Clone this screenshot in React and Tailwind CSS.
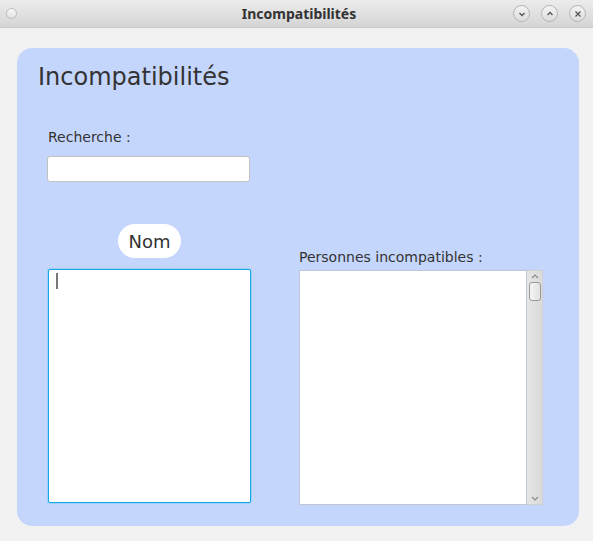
import React from 'react';

const WinButton = ({ children }) => (
  <div className="w-[17px] h-[17px] rounded-full border border-[#b4b4b4] bg-gradient-to-b from-[#f4f4f4] to-[#dcdcdc] flex items-center justify-center text-[#555]">
    {children}
  </div>
);

const App = () => {
  return (
    <div className="w-[593px] h-[541px] bg-[#f2f2f2] flex flex-col" style={{ fontFamily: "'DejaVu Sans', sans-serif" }}>
      {/* Title bar */}
      <div className="h-[28px] bg-gradient-to-b from-[#ececec] to-[#d5d5d5] border-b border-[#c8c8c8] grid grid-cols-[1fr_auto_1fr] items-center px-[6px]">
        <div className="w-[11px] h-[11px] rounded-full border border-[#bdbdbd] bg-gradient-to-b from-[#fafafa] to-[#e2e2e2]" />
        <div className="text-center text-[14px] font-bold text-[#333] pl-[5px]" style={{ fontFamily: "'Noto Sans', sans-serif" }}>
          Incompatibilités
        </div>
        <div className="flex items-center justify-end gap-[11px] pr-[1px]">
          <WinButton>
            <svg width="8" height="8" viewBox="0 0 8 8"><path d="M1.5 3 L4 5.5 L6.5 3" fill="none" stroke="currentColor" strokeWidth="1.3" /></svg>
          </WinButton>
          <WinButton>
            <svg width="8" height="8" viewBox="0 0 8 8"><path d="M1.5 5 L4 2.5 L6.5 5" fill="none" stroke="currentColor" strokeWidth="1.3" /></svg>
          </WinButton>
          <WinButton>
            <svg width="8" height="8" viewBox="0 0 8 8"><path d="M1.5 1.5 L6.5 6.5 M6.5 1.5 L1.5 6.5" fill="none" stroke="currentColor" strokeWidth="1.3" /></svg>
          </WinButton>
        </div>
      </div>

      {/* Body */}
      <div className="flex-1 pt-[20px] pl-[17px] pr-[14px] pb-[15px]">
        <div className="h-full rounded-[15px] bg-[#c5d6fd] pl-[21px] pt-[14px]">
          <h1 className="text-[24px] leading-[30px] text-[#333]">Incompatibilités</h1>

          <div className="pl-[10px] mt-[37px]">
            <div className="text-[14px] leading-[17px] text-[#333]">Recherche :</div>
            <div className="mt-[10px] -ml-[1px] w-[203px] h-[26px] bg-white border border-[#c2c2c2] rounded-[3px]" />
          </div>

          <div className="flex mt-[42px] pl-[10px]">
            {/* Left column */}
            <div className="w-[203px] flex flex-col items-center">
              <div className="h-[34px] px-[10px] rounded-full bg-white flex items-center text-[18px] text-[#333]">Nom</div>
              <div className="mt-[11px] w-[203px] h-[234px] bg-white border border-[#14a8e8] rounded-[2px] shadow-[0_0_0_1px_rgba(120,200,245,0.5)] pl-[7px] pt-[3px]">
                <div className="w-[2px] h-[16px] bg-[#777]" />
              </div>
            </div>

            {/* Right column */}
            <div className="ml-[48px] flex flex-col pt-[25px]">
              <div className="text-[14px] leading-[17px] text-[#333]">Personnes incompatibles :</div>
              <div className="mt-[4px] flex h-[235px]">
                <div className="w-[228px] bg-white border border-[#bfc7d6]" />
                <div className="w-[16px] bg-gradient-to-r from-[#e6e6e6] to-[#dadada] border-y border-r border-[#d0d0d0] flex flex-col items-center justify-between py-[2px]">
                  <div className="flex flex-col items-center">
                    <svg width="10" height="7" viewBox="0 0 10 7"><path d="M2 5 L5 2 L8 5" fill="none" stroke="#888" strokeWidth="1.1" /></svg>
                    <div className="mt-[2px] w-[12px] h-[19px] rounded-[3px] border border-[#9a9a9a] bg-gradient-to-r from-[#f4f4f4] to-[#e2e2e2]" />
                  </div>
                  <svg width="10" height="7" viewBox="0 0 10 7"><path d="M2 2 L5 5 L8 2" fill="none" stroke="#888" strokeWidth="1.1" /></svg>
                </div>
              </div>
            </div>
          </div>
        </div>
      </div>
    </div>
  );
};

export default App;
